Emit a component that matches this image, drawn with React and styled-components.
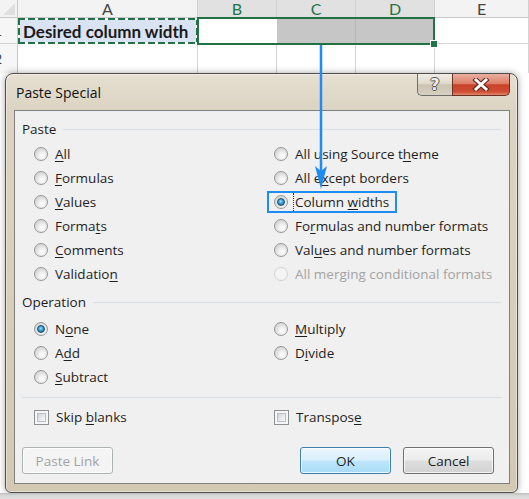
import React from 'react';
import styled, { createGlobalStyle, css } from 'styled-components';

const GlobalStyle = createGlobalStyle`
  html, body { margin: 0; padding: 0; background: #fff; }
  body { overflow: hidden; }
`;

const Screen = styled.div`
  position: relative;
  width: 529px;
  height: 499px;
  overflow: hidden;
  background: #fff;
  display: flex;
  flex-direction: column;
`;

/* ---------- worksheet ---------- */

const Sheet = styled.div`
  display: grid;
  grid-template-columns: 18px 180px 79px 79px 79px 1fr;
  grid-template-rows: 18px 26px 29px;
  font-family: Lato, "Open Sans", sans-serif;
  color: #222;
`;

const Corner = styled.div`
  background: #f3f3f3;
  border-right: 1px solid #c8c8c8;
  border-bottom: 1px solid #c8c8c8;
  position: relative;
  &::after {
    content: '';
    position: absolute;
    right: 2px;
    bottom: 2px;
    border-left: 12px solid transparent;
    border-bottom: 12px solid #dfdfdf;
  }
`;

const ColHead = styled.div`
  display: flex;
  align-items: center;
  justify-content: center;
  font-size: 16px;
  background: ${p => (p.$active ? '#e1e1e1' : '#f3f3f3')};
  color: ${p => (p.$active ? '#217346' : '#444')};
  border-right: 1px solid #d0d0d0;
  border-bottom: 1px solid #c8c8c8;
`;

const RowHead = styled.div`
  display: flex;
  align-items: center;
  overflow: hidden;
  background: #f6f6f6;
  border-right: 1px solid #c8c8c8;
  border-bottom: ${p => (p.$last ? 'none' : '1px solid #d4d4d4')};
  font-size: 14px;
  color: #444;
  span { margin-left: -6px; }
`;

const Cell = styled.div`
  border-right: 1px solid #d4d4d4;
  border-bottom: ${p => (p.$last ? 'none' : '1px solid #d4d4d4')};
`;

const dash = (dir, size) =>
  `linear-gradient(${dir}, #217346 0 70%, #fff 70%) ${size}`;

const CopiedCell = styled.div`
  display: flex;
  align-items: center;
  padding-left: 5px;
  font-size: 17px;
  font-weight: 700;
  color: #1a1a1a;
  white-space: nowrap;
  background:
    ${dash('90deg', 'top left / 10px 2px repeat-x')},
    ${dash('90deg', 'bottom left / 10px 2px repeat-x')},
    ${dash('180deg', 'top left / 2px 10px repeat-y')},
    ${dash('180deg', 'top right / 2px 10px repeat-y')},
    #dae3f3;
`;

const Range = styled.div`
  grid-column: 3 / 6;
  position: relative;
  display: grid;
  grid-template-columns: 1fr 1fr 1fr;
  margin: -1px 0 -1px -1px;
  border: 2px solid #217346;
`;

const RangeCell = styled.div`
  background: ${p => (p.$shade ? '#c6c6c6' : '#fff')};
  border-left: ${p => (p.$line ? '1px solid #b5b5b5' : 'none')};
`;

const FillHandle = styled.span`
  position: absolute;
  right: -5px;
  bottom: -5px;
  width: 6px;
  height: 6px;
  background: #217346;
  border: 1px solid #fff;
`;

/* ---------- dialog window ---------- */

const Dialog = styled.div`
  box-sizing: border-box;
  height: 420px;
  margin: 0 11px 0 5px;
  display: flex;
  flex-direction: column;
  padding: 0 7px 8px 8px;
  border: 1px solid #4e4e4e;
  border-radius: 8px 8px 6px 6px;
  background: linear-gradient(180deg, #e6e0d2 0px, #dcd4c2 36px, #d3c9b3 100%);
  box-shadow: inset 0 0 0 1px rgba(255, 255, 255, 0.45), 0 0 7px rgba(0, 0, 0, 0.35);
  font-family: "Open Sans", "Noto Sans", sans-serif;
  font-size: 13.5px;
  color: #1e1e1e;
  u {
    text-decoration-thickness: 1px;
    text-underline-offset: 2px;
  }
`;

const TitleBar = styled.div`
  height: 36px;
  display: flex;
  align-items: flex-start;
`;

const Title = styled.div`
  margin: 9px 0 0 2px;
  font-size: 14px;
  color: #111;
`;

const Caption = styled.div`
  margin-left: auto;
  display: flex;
`;

const CaptionButton = styled.div`
  height: 22px;
  display: flex;
  align-items: center;
  justify-content: center;
  box-sizing: border-box;
  ${p =>
    p.$close
      ? css`
          width: 58px;
          border: 1px solid #6b3126;
          border-top: none;
          border-radius: 0 0 5px 0;
          background: linear-gradient(180deg, #eab0a1 0%, #df8068 45%, #c8422a 52%, #cf4e34 85%, #e0896b 100%);
        `
      : css`
          width: 35px;
          border: 1px solid #6e6e6e;
          border-top: none;
          border-right: none;
          border-radius: 0 0 0 5px;
          background: linear-gradient(180deg, #f1ede6 0%, #e0dacd 45%, #cbc3b0 52%, #d8d1c1 100%);
        `}
`;

const HelpMark = styled.span`
  font-family: "DejaVu Sans", sans-serif;
  font-weight: 700;
  font-size: 16px;
  line-height: 1;
  color: #eeeeee;
  text-shadow: 1px 0 #555, -1px 0 #555, 0 1px #555, 0 -1px #555;
`;

const Panel = styled.div`
  flex: 1;
  display: flex;
  flex-direction: column;
  padding: 9px 7px 9px 7px;
  background: #f0f0f0;
  border: 1px solid #7f7f7f;
`;

const GroupHead = styled.div`
  height: 18px;
  display: flex;
  align-items: center;
  gap: 7px;
  margin-top: ${p => p.$gap || 0}px;
  &::after {
    content: '';
    flex: 1;
    height: 1px;
    background: #d5dfe5;
  }
`;

const Columns = styled.div`
  display: grid;
  grid-template-columns: 240px 1fr;
  padding-left: 12px;
  margin-top: ${p => p.$gap || 0}px;
`;

const Stack = styled.div`
  display: flex;
  flex-direction: column;
`;

const Option = styled.div`
  height: 24px;
  display: flex;
  align-items: center;
  gap: 7px;
  color: ${p => (p.$disabled ? '#a3a3a3' : 'inherit')};
  ${p =>
    p.$marked &&
    css`
      align-self: flex-start;
      box-sizing: border-box;
      height: 22px;
      margin: 1px 0 1px -7px;
      padding: 0 6px 0 5px;
      border: 2px solid #1e8cf0;
    `}
`;

const FocusLabel = styled.span`
  padding-left: 1px;
  border-left: 1px dotted #333;
  margin-left: -2px;
`;

const Radio = styled.span`
  flex: none;
  width: 14px;
  height: 14px;
  box-sizing: border-box;
  border-radius: 50%;
  display: flex;
  align-items: center;
  justify-content: center;
  border: 1px solid ${p => (p.$disabled ? '#d2d2d2' : '#979797')};
  background: ${p =>
    p.$disabled
      ? '#f4f4f4'
      : 'radial-gradient(circle at 60% 65%, #ffffff 0, #f0f0f0 30%, #d4d4d4 75%, #c4c4c4 100%)'};
  ${p =>
    p.$checked &&
    css`
      &::after {
        content: '';
        width: 8px;
        height: 8px;
        box-sizing: border-box;
        border-radius: 50%;
        border: 1px solid #1b4e6b;
        background: radial-gradient(circle at 45% 40%, #a8e6ff 0, #3aa3dc 40%, #0d5f8e 100%);
      }
    `}
`;

const Check = styled.span`
  flex: none;
  width: 15px;
  height: 15px;
  box-sizing: border-box;
  border: 1px solid #8e8f8f;
  padding: 2px;
  background: #f6f6f6;
  &::after {
    content: '';
    display: block;
    width: 100%;
    height: 100%;
    box-sizing: border-box;
    border: 1px solid #b9bec4;
    background: linear-gradient(135deg, #cfd3d8 0%, #eef0f2 70%, #f8f8f8 100%);
  }
`;

const Separator = styled.div`
  height: 1px;
  margin-top: 8px;
  background: #d5dfe5;
`;

const Buttons = styled.div`
  display: flex;
  gap: 12px;
  margin-top: 18px;
  padding-right: 8px;
`;

const Button = styled.button`
  width: 91px;
  height: 27px;
  padding: 0;
  font: inherit;
  color: #1e1e1e;
  border-radius: 3px;
  border: 1px solid #707070;
  background: linear-gradient(180deg, #f4f4f4 0%, #ececec 48%, #dedede 52%, #d2d2d2 100%);
  box-shadow: inset 0 0 0 1px rgba(255, 255, 255, 0.75);
  ${p =>
    p.$primary &&
    css`
      border-color: #3c7fb1;
      background: linear-gradient(180deg, #eaf6fd 0%, #d9f0fc 48%, #bee6fd 52%, #a9dbf6 100%);
    `}
  ${p =>
    p.disabled &&
    css`
      border-color: #adb2b5;
      background: #f4f4f4;
      color: #a3a3a3;
    `}
  &:first-child {
    margin-right: auto;
  }
`;

const BottomStrip = styled.div`
  flex: 1;
  background: linear-gradient(180deg, #bdbdbd 0%, #d6d6d6 40%, #e2e2e2 100%);
`;

const Pointer = styled.svg`
  position: absolute;
  left: 313px;
  top: 45px;
  pointer-events: none;
`;

/* ---------- data ---------- */

const pasteLeft = [
  ['All', 0],
  ['Formulas', 0],
  ['Values', 0],
  ['Formats', 5],
  ['Comments', 0],
  ['Validation', 9],
];

const pasteRight = [
  ['All using Source theme', 18],
  ['All except borders', 5],
  ['Column widths', 7, { checked: true, marked: true }],
  ['Formulas and number formats', 2],
  ['Values and number formats', 3],
  ['All merging conditional formats', -1, { disabled: true }],
];

const opLeft = [
  ['None', 1, { checked: true }],
  ['Add', 1],
  ['Subtract', 0],
];

const opRight = [
  ['Multiply', 0],
  ['Divide', 1],
];

const Accel = ({ text, at }) =>
  at < 0 ? (
    text
  ) : (
    <>
      {text.slice(0, at)}
      <u>{text[at]}</u>
      {text.slice(at + 1)}
    </>
  );

const RadioOption = ({ item }) => {
  const [text, at, opts = {}] = item;
  const label = <Accel text={text} at={at} />;
  return (
    <Option $disabled={opts.disabled} $marked={opts.marked}>
      <Radio $checked={opts.checked} $disabled={opts.disabled} />
      {opts.marked ? <FocusLabel>{label}</FocusLabel> : <span>{label}</span>}
    </Option>
  );
};

const RadioList = ({ items }) => (
  <Stack>
    {items.map(item => (
      <RadioOption key={item[0]} item={item} />
    ))}
  </Stack>
);

export default function App() {
  return (
    <Screen>
      <GlobalStyle />
      <Sheet>
        <Corner />
        <ColHead>A</ColHead>
        <ColHead $active>B</ColHead>
        <ColHead $active>C</ColHead>
        <ColHead $active>D</ColHead>
        <ColHead>E</ColHead>

        <RowHead><span>1</span></RowHead>
        <CopiedCell>Desired column width</CopiedCell>
        <Range>
          <RangeCell />
          <RangeCell $shade />
          <RangeCell $shade $line />
          <FillHandle />
        </Range>
        <Cell />

        <RowHead $last><span>2</span></RowHead>
        <Cell $last />
        <Cell $last />
        <Cell $last />
        <Cell $last />
        <Cell $last />
      </Sheet>

      <Dialog>
        <TitleBar>
          <Title>Paste Special</Title>
          <Caption>
            <CaptionButton>
              <HelpMark>?</HelpMark>
            </CaptionButton>
            <CaptionButton $close>
              <svg width="18" height="13" viewBox="0 0 18 13">
                <path d="M4 2 L14 11 M14 2 L4 11" stroke="#5a2218" strokeWidth="5" strokeLinecap="square" />
                <path d="M4 2 L14 11 M14 2 L4 11" stroke="#fff" strokeWidth="3" strokeLinecap="square" />
              </svg>
            </CaptionButton>
          </Caption>
        </TitleBar>

        <Panel>
          <GroupHead>Paste</GroupHead>
          <Columns $gap={4}>
            <RadioList items={pasteLeft} />
            <RadioList items={pasteRight} />
          </Columns>

          <GroupHead $gap={7}>Operation</GroupHead>
          <Columns $gap={6}>
            <RadioList items={opLeft} />
            <RadioList items={opRight} />
          </Columns>

          <Separator />

          <Columns $gap={7}>
            <Option>
              <Check />
              <span>
                <Accel text="Skip blanks" at={5} />
              </span>
            </Option>
            <Option>
              <Check />
              <span>
                <Accel text="Transpose" at={8} />
              </span>
            </Option>
          </Columns>

          <Buttons>
            <Button disabled>Paste Link</Button>
            <Button $primary>OK</Button>
            <Button>Cancel</Button>
          </Buttons>
        </Panel>
      </Dialog>
      <BottomStrip />

      <Pointer width="16" height="146" viewBox="0 0 16 146">
        <line x1="8" y1="0" x2="8" y2="128" stroke="#1e8cf0" strokeWidth="2.5" />
        <path d="M2 121 L8 144 L14 121 L8 126 Z" fill="#1e8cf0" />
      </Pointer>
    </Screen>
  );
}
